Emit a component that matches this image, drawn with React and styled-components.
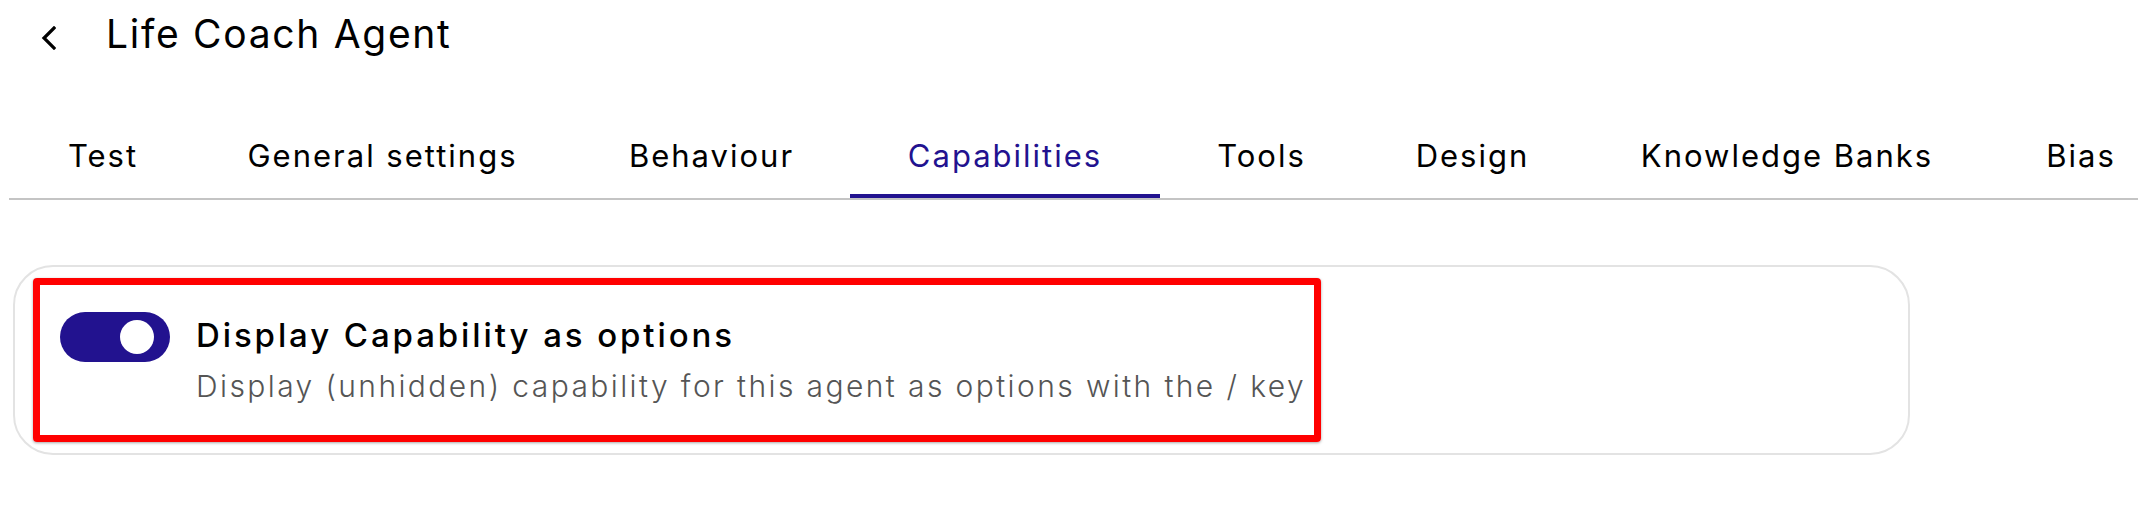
import React, { useState } from "react";
import styled, { createGlobalStyle } from "styled-components";

const Global = createGlobalStyle`
  html, body { margin: 0; padding: 0; background: #ffffff; }
  body { font-family: Inter, "Noto Sans", "Liberation Sans", sans-serif; color: #000; }
  * { box-sizing: border-box; }
`;

const ACCENT = "#22128f";

const Page = styled.div`
  width: 2138px;
  min-height: 524px;
  background: #fff;
`;

const Header = styled.header`
  display: flex;
  align-items: center;
  padding: 10px 0 0 40px;
  gap: 50px;
`;

const BackButton = styled.button`
  display: flex;
  align-items: center;
  justify-content: center;
  width: 16px;
  height: 24px;
  margin-top: 8px;
  padding: 0;
  border: 0;
  background: transparent;
  cursor: pointer;
  color: #000;
`;

const Title = styled.h1`
  margin: 0;
  font-size: 39px;
  line-height: 48px;
  font-weight: 400;
  letter-spacing: 1.7px;
  color: #000;
`;

const TabBar = styled.nav`
  display: flex;
  margin: 63px 0 0 9px;
  padding-left: 5px;
  border-bottom: 2px solid #c4c4c4;
`;

const Tab = styled.button`
  flex: none;
  padding: 12px 0 16px;
  width: ${(p) => p.$w}px;
  border: 0;
  border-bottom: 4px solid ${(p) => (p.$active ? ACCENT : "transparent")};
  background: transparent;
  font-family: inherit;
  font-size: 31px;
  line-height: 45px;
  font-weight: 400;
  letter-spacing: 2px;
  color: ${(p) => (p.$active ? ACCENT : "#000")};
  text-align: center;
  white-space: nowrap;
  cursor: pointer;
`;

const Card = styled.section`
  margin: 65px 0 0 13px;
  width: 1897px;
  height: 190px;
  padding: 11px 0 0 18px;
  border: 2px solid #e3e3e3;
  border-radius: 40px;
`;

const Highlight = styled.div`
  display: inline-flex;
  align-items: flex-start;
  gap: 26px;
  height: 164px;
  padding: 26px 8px 0 20px;
  border: 7px solid #ff0000;
  border-radius: 4px;
  box-shadow: 0 1px 3px rgba(0, 0, 0, 0.35);
`;

const Switch = styled.button`
  position: relative;
  flex: none;
  width: 110px;
  height: 50px;
  margin-top: 1px;
  padding: 0;
  border: 0;
  border-radius: 25px;
  background: ${(p) => (p.$on ? ACCENT : "#bdbdbd")};
  cursor: pointer;
`;

const Knob = styled.span`
  position: absolute;
  top: 8px;
  left: ${(p) => (p.$on ? 60 : 16)}px;
  width: 34px;
  height: 34px;
  border-radius: 50%;
  background: #fff;
`;

const TextBlock = styled.div`
  display: flex;
  flex-direction: column;
  gap: 5px;
`;

const OptionTitle = styled.div`
  font-size: 33px;
  line-height: 48px;
  font-weight: 500;
  letter-spacing: 2.9px;
  color: #000;
`;

const OptionDesc = styled.div`
  font-size: 30px;
  line-height: 45px;
  font-weight: 300;
  letter-spacing: 2.4px;
  color: #555555;
`;

const tabs = [
  { label: "Test", w: 178 },
  { label: "General settings", w: 381 },
  { label: "Behaviour", w: 277 },
  { label: "Capabilities", w: 310 },
  { label: "Tools", w: 203 },
  { label: "Design", w: 219 },
  { label: "Knowledge Banks", w: 410 },
  { label: "Bias", w: 178 },
];

export default function App() {
  const [on, setOn] = useState(true);
  return (
    <Page>
      <Global />
      <Header>
        <BackButton aria-label="Back">
          <svg width="16" height="24" viewBox="0 0 16 24" fill="none">
            <path d="M14 2 L4 12 L14 22" stroke="currentColor" strokeWidth="3.2" strokeLinecap="square" strokeLinejoin="miter" />
          </svg>
        </BackButton>
        <Title>Life Coach Agent</Title>
      </Header>
      <TabBar>
        {tabs.map((t) => (
          <Tab key={t.label} $w={t.w} $active={t.label === "Capabilities"}>
            {t.label}
          </Tab>
        ))}
      </TabBar>
      <Card>
        <Highlight>
          <Switch $on={on} onClick={() => setOn(!on)} aria-label="Display Capability as options">
            <Knob $on={on} />
          </Switch>
          <TextBlock>
            <OptionTitle>Display Capability as options</OptionTitle>
            <OptionDesc>Display (unhidden) capability for this agent as options with the / key</OptionDesc>
          </TextBlock>
        </Highlight>
      </Card>
    </Page>
  );
}
